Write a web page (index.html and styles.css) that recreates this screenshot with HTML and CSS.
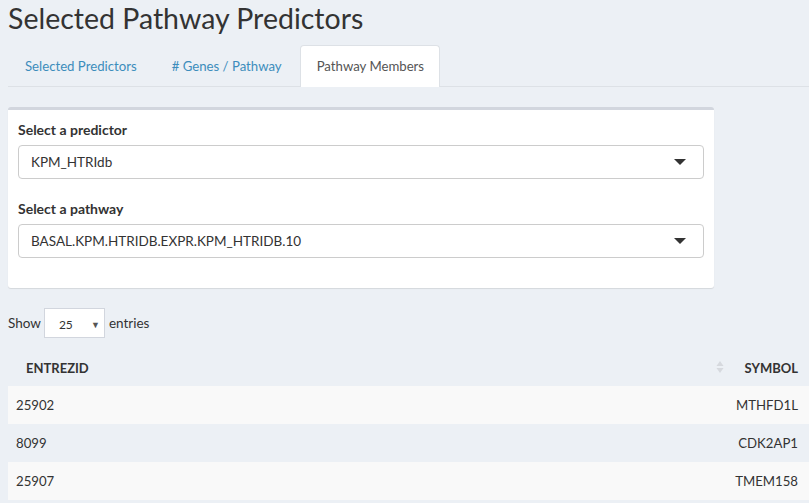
FILE: index.html
```html
<!DOCTYPE html>
<html>
<head>
<meta charset="utf-8">
<link rel="stylesheet" href="styles.css">
</head>
<body>
<div class="page">
  <h2 class="title">Selected Pathway Predictors</h2>
  <ul class="tabs">
    <li class="tab"><a>Selected Predictors</a></li>
    <li class="tab"><a># Genes / Pathway</a></li>
    <li class="tab active"><a>Pathway Members</a></li>
  </ul>
  <div class="box">
    <div class="field">
      <label class="label">Select a predictor</label>
      <div class="select"><span>KPM_HTRIdb</span><span class="caret"></span></div>
    </div>
    <div class="field">
      <label class="label">Select a pathway</label>
      <div class="select"><span>BASAL.KPM.HTRIDB.EXPR.KPM_HTRIDB.10</span><span class="caret"></span></div>
    </div>
  </div>
  <div class="length">
    <span>Show</span>
    <div class="len-select"><span>25</span><span class="small-caret">▼</span></div>
    <span>entries</span>
  </div>
  <table class="table">
    <thead>
      <tr>
        <th class="col-id">ENTREZID<span class="sort"><svg width="8" height="14" viewBox="0 0 8 14"><path d="M4 1 L7.5 6 L0.5 6 Z" fill="#d6d9de"/><path d="M4 13 L7.5 8 L0.5 8 Z" fill="#d6d9de"/></svg></span></th>
        <th class="col-sym">SYMBOL</th>
      </tr>
    </thead>
    <tbody>
      <tr class="odd"><td>25902</td><td class="sym">MTHFD1L</td></tr>
      <tr class="even"><td>8099</td><td class="sym">CDK2AP1</td></tr>
      <tr class="odd"><td>25907</td><td class="sym">TMEM158</td></tr>
    </tbody>
  </table>
</div>
</body>
</html>
```
FILE: styles.css
```css
html, body {
  margin: 0;
  padding: 0;
  background: #ecf0f5;
  overflow: hidden;
}
body {
  font-family: Lato, "Liberation Sans", sans-serif;
  color: #333;
  font-size: 13.5px;
}
.page {
  padding: 0 0 0 8px;
  width: 801px;
}
.title {
  margin: 0;
  padding-top: 2px;
  font-size: 28.5px;
  font-weight: 400;
  line-height: 33px;
  color: #333;
  height: 43px;
}
.tabs {
  list-style: none;
  margin: 0;
  padding: 0;
  display: flex;
  border-bottom: 1px solid #dde1e6;
  height: 41px;
  font-size: 13.2px;
}
.tab a {
  display: block;
  padding: 0 15px 0 16px;
  height: 41px;
  line-height: 41px;
  color: #3c8dbc;
  border: 1px solid transparent;
  border-bottom: none;
  border-radius: 4px 4px 0 0;
  box-sizing: border-box;
  margin-right: 2px;
}
.tab.active a {
  background: #fff;
  color: #555;
  border-color: #dde1e6;
  height: 42px;
}
.box {
  margin-top: 20px;
  width: 706px;
  background: #fff;
  border-top: 3px solid #d2d6de;
  border-radius: 3px;
  box-shadow: 0 1px 1px rgba(0,0,0,0.1);
  padding: 10px 10px 10px 10px;
  box-sizing: border-box;
}
.field { margin-bottom: 20px; }
.label {
  display: block;
  font-weight: 700;
  font-size: 14px;
  margin-bottom: 5px;
  line-height: 20px;
}
.select {
  height: 34px;
  border: 1px solid #ccc;
  border-radius: 4px;
  box-sizing: border-box;
  display: flex;
  align-items: center;
  justify-content: space-between;
  padding: 0 17px 0 12px;
  color: #333;
}
.caret {
  width: 0; height: 0;
  border-left: 6px solid transparent;
  border-right: 6px solid transparent;
  border-top: 6px solid #333;
}
.length {
  display: flex;
  align-items: center;
  margin-top: 20px;
  height: 30px;
}
.len-select {
  width: 61px;
  height: 30px;
  box-sizing: border-box;
  border: 1px solid #d2d6de;
  background: #fff;
  margin: 0 4px 0 3px;
  display: flex;
  align-items: center;
  justify-content: space-between;
  padding: 2px 4px 0 14px;
  font-size: 12px;
}
.small-caret { font-size: 9px; color: #555; }
.table {
  margin-top: 7px;
  border-collapse: collapse;
  width: 801px;
}
.table th {
  font-weight: 700;
  font-size: 13px;
  height: 36px;
  text-align: left;
  padding: 5px 0 0 0;
}
.col-id { padding-left: 18px !important; position: relative; }
.sort { position: absolute; right: 3px; top: 15px; }
.col-sym { text-align: right !important; padding-right: 11px !important; width: 69px; }
.table td {
  height: 38px;
  padding: 0 0 0 8px;
  font-size: 13.2px;
}
.table td.sym { text-align: right; padding-right: 11px; }
.odd { background: #f9f9f9; }
.even { background: #ecf0f5; }
```
